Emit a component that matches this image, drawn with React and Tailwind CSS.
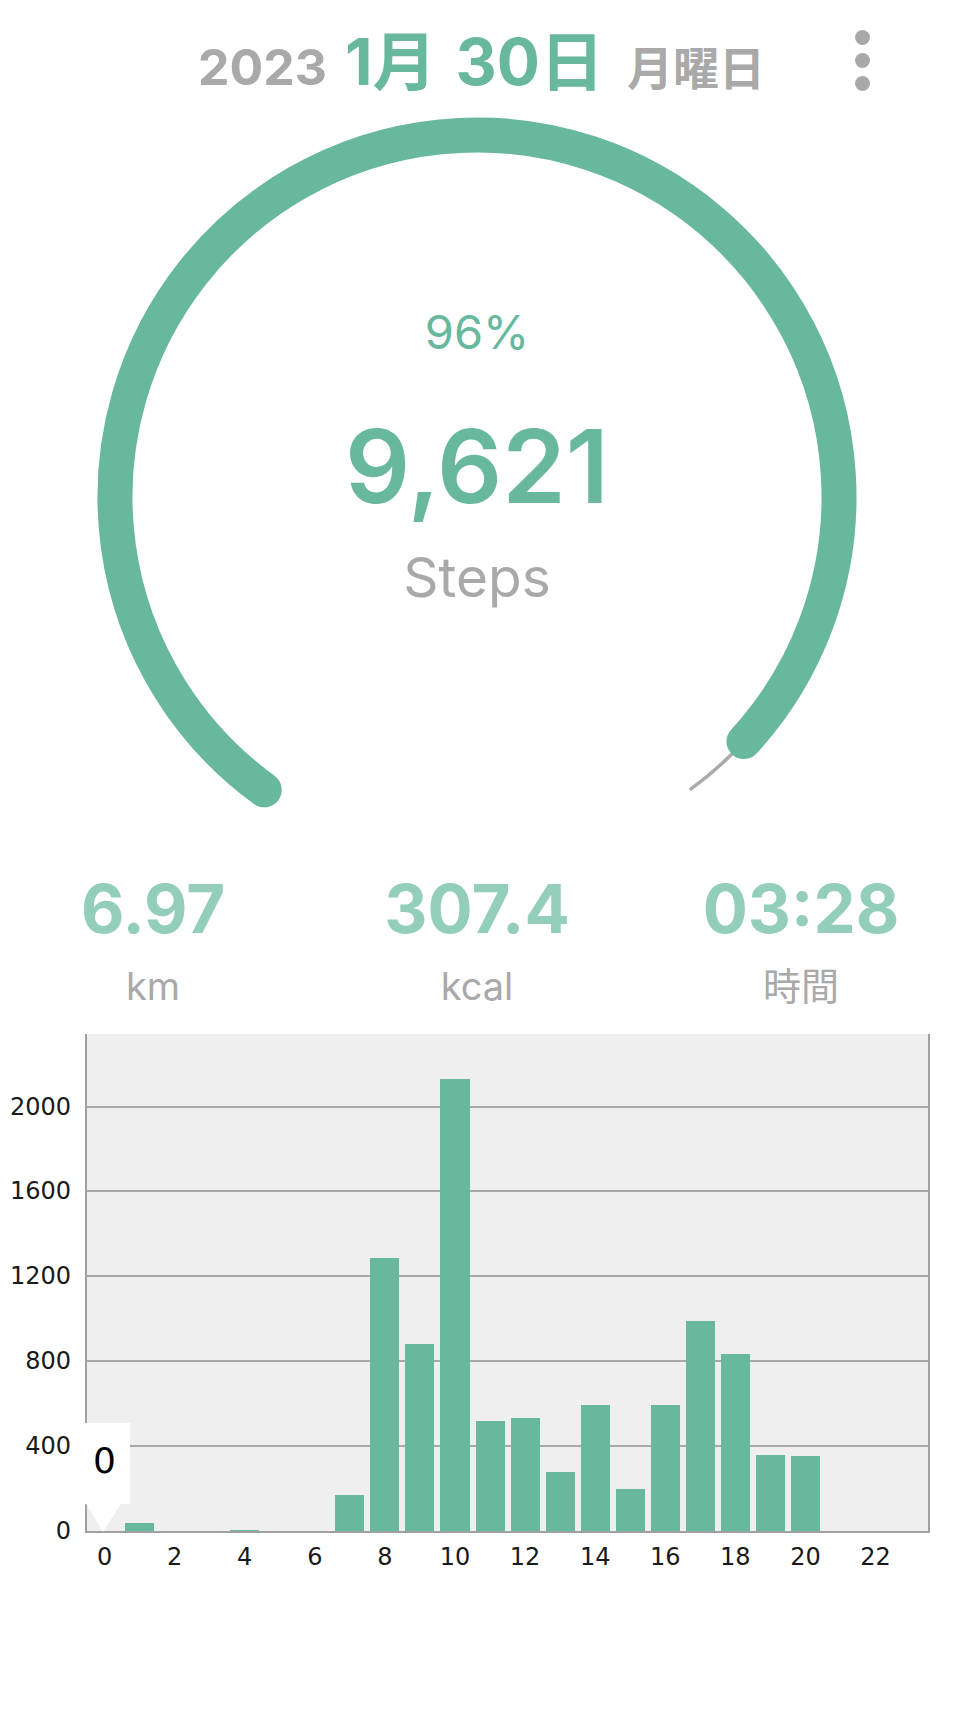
const hourly = [0, 38, 0, 0, 7, 0, 0, 168, 1288, 880, 2129, 520, 532, 276, 592, 196, 594, 990, 834, 360, 355, 0, 0, 0]
const MAX = 2342
const PLOT_H = 497
const ticks = [0, 400, 800, 1200, 1600, 2000]

const stats = [
  { value: "6.97", unit: "km" },
  { value: "307.4", unit: "kcal" },
  { value: "03:28", unit: "時間" },
]

function polar(cx, cy, r, deg) {
  const a = (deg * Math.PI) / 180
  return [cx + r * Math.cos(a), cy + r * Math.sin(a)]
}

function arc(cx, cy, r, from, to) {
  const [x1, y1] = polar(cx, cy, r, from)
  const [x2, y2] = polar(cx, cy, r, to)
  const large = to - from > 180 ? 1 : 0
  return `M ${x1} ${y1} A ${r} ${r} 0 ${large} 1 ${x2} ${y2}`
}

function Header() {
  return (
    <header className="grid grid-cols-[1fr_auto_1fr] h-[100px] pt-[30px]">
      <div />
      <div className="flex items-baseline leading-none font-bold pl-[9px]">
        <span className="text-[50px] text-[#a9a9a9]">2023</span>
        <span className="ml-[18px] text-[64px] text-[#68b89d]">1月</span>
        <span className="ml-[19px] text-[64px] text-[#68b89d]">30日</span>
        <span className="ml-[23px] text-[46px] text-[#a9a9a9]">月曜日</span>
      </div>
      <div className="flex justify-end items-start pr-[84px]">
        <button className="flex flex-col gap-[8px]">
          <span className="block w-[15px] h-[15px] rounded-full bg-[#a9a9a9]" />
          <span className="block w-[15px] h-[15px] rounded-full bg-[#a9a9a9]" />
          <span className="block w-[15px] h-[15px] rounded-full bg-[#a9a9a9]" />
        </button>
      </div>
    </header>
  )
}

function Gauge({ percent, steps }) {
  const start = 126
  const span = 288
  const end = start + (span * percent) / 100
  return (
    <div className="grid h-[720px]">
      <svg className="[grid-area:1/1]" width="954" height="720" viewBox="0 0 954 720">
        <path d={arc(477, 397, 362, start, start + span)} fill="none" stroke="#aaaaaa" strokeWidth="3.5" />
        <path d={arc(477, 397, 362, start, end)} fill="none" stroke="#68b89d" strokeWidth="35" strokeLinecap="round" />
      </svg>
      <div className="[grid-area:1/1] flex flex-col items-center pt-[208px] leading-none">
        <div className="text-[47px] text-[#68b89d]">{percent}%</div>
        <div className="mt-[60px] text-[102px] font-semibold text-[#68b89d]">{steps}</div>
        <div className="mt-[33px] text-[55px] text-[#a9a9a9]">Steps</div>
      </div>
    </div>
  )
}

function Stats() {
  return (
    <div className="mt-[55px] flex justify-center gap-[24px]">
      {stats.map(s => (
        <div key={s.unit} className="w-[300px] flex flex-col items-center leading-none">
          <div className="text-[67px] font-bold text-[#93ceba]">{s.value}</div>
          <div className="mt-[25px] text-[38px] text-[#a9a9a9]">{s.unit}</div>
        </div>
      ))}
    </div>
  )
}

function Chart() {
  return (
    <div className="mt-[29px] flex font-['DejaVu_Sans',sans-serif] text-[24px] leading-none text-[#1a1a1a]">
      <div className="relative w-[85px] h-[499px]">
        {ticks.map(t => (
          <div
            key={t}
            className="absolute right-[14px] -translate-y-1/2"
            style={{ top: PLOT_H - (t / MAX) * PLOT_H }}
          >
            {t}
          </div>
        ))}
      </div>
      <div className="relative w-[845px]">
        <div className="relative h-[499px] bg-[#efefef] border-x-2 border-b-2 border-[#a0a0a0]">
          {ticks.slice(1).map(t => (
            <div
              key={t}
              className="absolute left-0 right-0 h-[2px] bg-[#a8a8a8]"
              style={{ bottom: (t / MAX) * PLOT_H - 1 }}
            />
          ))}
          <div className="relative flex items-end h-full">
            {hourly.map((v, i) => (
              <div key={i} className="flex-1 px-[3px] flex items-end h-full">
                <div className="w-full bg-[#68b89d]" style={{ height: (v / MAX) * PLOT_H }} />
              </div>
            ))}
          </div>
        </div>
        <div className="flex px-[2px] mt-[12px]">
          {hourly.map((_, i) => (
            <div key={i} className="flex-1 flex justify-center">
              {i % 2 === 0 ? i : ""}
            </div>
          ))}
        </div>
        <div className="absolute left-0 top-[389px]">
          <div className="w-[45px] h-[81px] bg-white pl-[8px] pt-[20px] text-[36px] text-black">0</div>
          <svg width="37" height="28" viewBox="0 0 37 28" className="block">
            <polygon points="1,0 36,0 18,28" fill="#ffffff" />
          </svg>
        </div>
      </div>
    </div>
  )
}

export default function App() {
  return (
    <div className="w-[954px] h-[1719px] bg-white font-['Inter','Noto_Sans_CJK_JP',sans-serif] overflow-hidden">
      <Header />
      <Gauge percent={96} steps="9,621" />
      <Stats />
      <Chart />
    </div>
  )
}
